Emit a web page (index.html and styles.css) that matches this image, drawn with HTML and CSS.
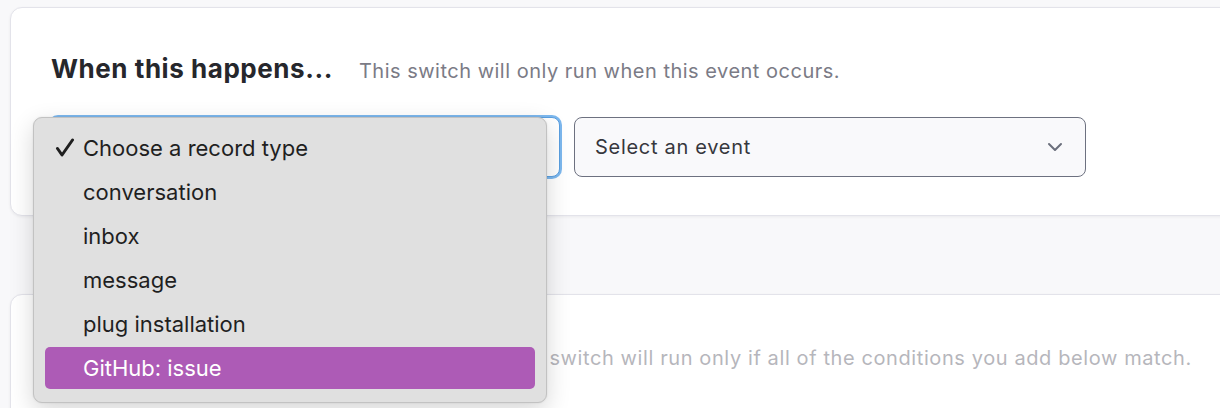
FILE: index.html
```html
<!DOCTYPE html>
<html>
<head>
<meta charset="utf-8">
<link rel="stylesheet" href="styles.css">
</head>
<body>
<div class="page">
  <section class="card card-trigger">
    <div class="card-head">
      <h2 class="card-title">When this happens...</h2>
      <p class="card-sub">This switch will only run when this event occurs.</p>
    </div>
    <div class="selects">
      <div class="select select-focus"><span class="select-text">Choose a record type</span></div>
      <div class="select select-event">
        <span class="select-text">Select an event</span>
        <svg class="chev" width="16" height="10" viewBox="0 0 16 10"><path d="M2 2 L8 8 L14 2" fill="none" stroke="#6b6f7c" stroke-width="2" stroke-linecap="round" stroke-linejoin="round"/></svg>
      </div>
    </div>
  </section>

  <section class="card card-cond">
    <div class="card-head">
      <h2 class="card-title cond-title">And only if these conditions match...</h2>
      <p class="card-sub">The switch will run only if all of the conditions you add below match.</p>
    </div>
  </section>

  <ul class="menu">
    <li class="menu-item"><svg class="check" width="20" height="20" viewBox="0 0 20 20"><path d="M2.5 10.5 L7 17 L17.5 2" fill="none" stroke="#1f1f1f" stroke-width="3" stroke-linecap="round" stroke-linejoin="round"/></svg>Choose a record type</li>
    <li class="menu-item">conversation</li>
    <li class="menu-item">inbox</li>
    <li class="menu-item">message</li>
    <li class="menu-item">plug installation</li>
    <li class="menu-item active">GitHub: issue</li>
  </ul>
</div>
</body>
</html>
```

FILE: styles.css
```css
* { box-sizing: border-box; }
html, body { margin: 0; padding: 0; }
body {
  background: #f8f8fa;
  font-family: Inter, "Liberation Sans", sans-serif;
  width: 1220px;
  height: 408px;
  overflow: hidden;
}
.page {
  position: relative;
  padding: 7px 0 0 10px;
  display: flex;
  flex-direction: column;
  gap: 78px;
}
.card {
  width: 1240px;
  background: #ffffff;
  border: 1px solid #e3e3ea;
  border-radius: 12px;
  box-shadow: 0 1px 3px rgba(20, 20, 40, 0.06);
  padding: 45px 0 0 40px;
  flex-shrink: 0;
}
.card-trigger { height: 209px; }
.card-cond { height: 200px; }
.card-head {
  display: flex;
  align-items: baseline;
  gap: 26px;
  height: 32px;
  white-space: nowrap;
}
.card-title {
  margin: 0;
  font-size: 26px;
  line-height: 32px;
  font-weight: 700;
  color: #26272c;
  letter-spacing: 0.55px;
}
.card-sub {
  margin: 0;
  font-size: 20px;
  line-height: 26px;
  color: #7b7b86;
  letter-spacing: 0.5px;
}
.card-cond .card-head { opacity: 0.55; }
.cond-title { width: 428px; overflow: hidden; flex-shrink: 0; }
.card-cond .card-sub { letter-spacing: 0.6px; }
.selects {
  display: flex;
  gap: 14px;
  margin-top: 32px;
}
.select {
  height: 60px;
  border-radius: 8px;
  display: flex;
  align-items: center;
  padding: 0 20px;
  font-size: 20px;
  color: #36373d;
  letter-spacing: 0.7px;
}
.select-focus {
  width: 510px;
  margin-left: -1px;
  border: 1px solid #5a9fe0;
  box-shadow: 0 0 0 2px #7db8ee;
  background: #ffffff;
}
.select-event {
  width: 512px;
  border: 1px solid #6d7180;
  background: #f9f9fb;
  justify-content: space-between;
  padding-right: 22px;
}
.chev { display: block; }
.menu {
  position: absolute;
  left: 33px;
  top: 117px;
  width: 514px;
  height: 286px;
  margin: 0;
  padding: 9px 11px 0;
  list-style: none;
  background: #e0e0e0;
  border: 1px solid #c2c2c2;
  border-radius: 9px;
  box-shadow: 0 8px 24px rgba(0, 0, 0, 0.16), 0 0 2px rgba(0, 0, 0, 0.1);
  font-family: Inter, "Liberation Sans", sans-serif;
}
.menu-item {
  position: relative;
  height: 42px;
  margin: 0 0 2px;
  padding-left: 38px;
  display: flex;
  align-items: center;
  font-size: 22px;
  color: #1f1f1f;
  border-radius: 5px;
}
.check {
  position: absolute;
  left: 10px;
  top: 11px;
  display: block;
}
.menu-item.active {
  background: #ad5bb6;
  color: #ffffff;
}
```
